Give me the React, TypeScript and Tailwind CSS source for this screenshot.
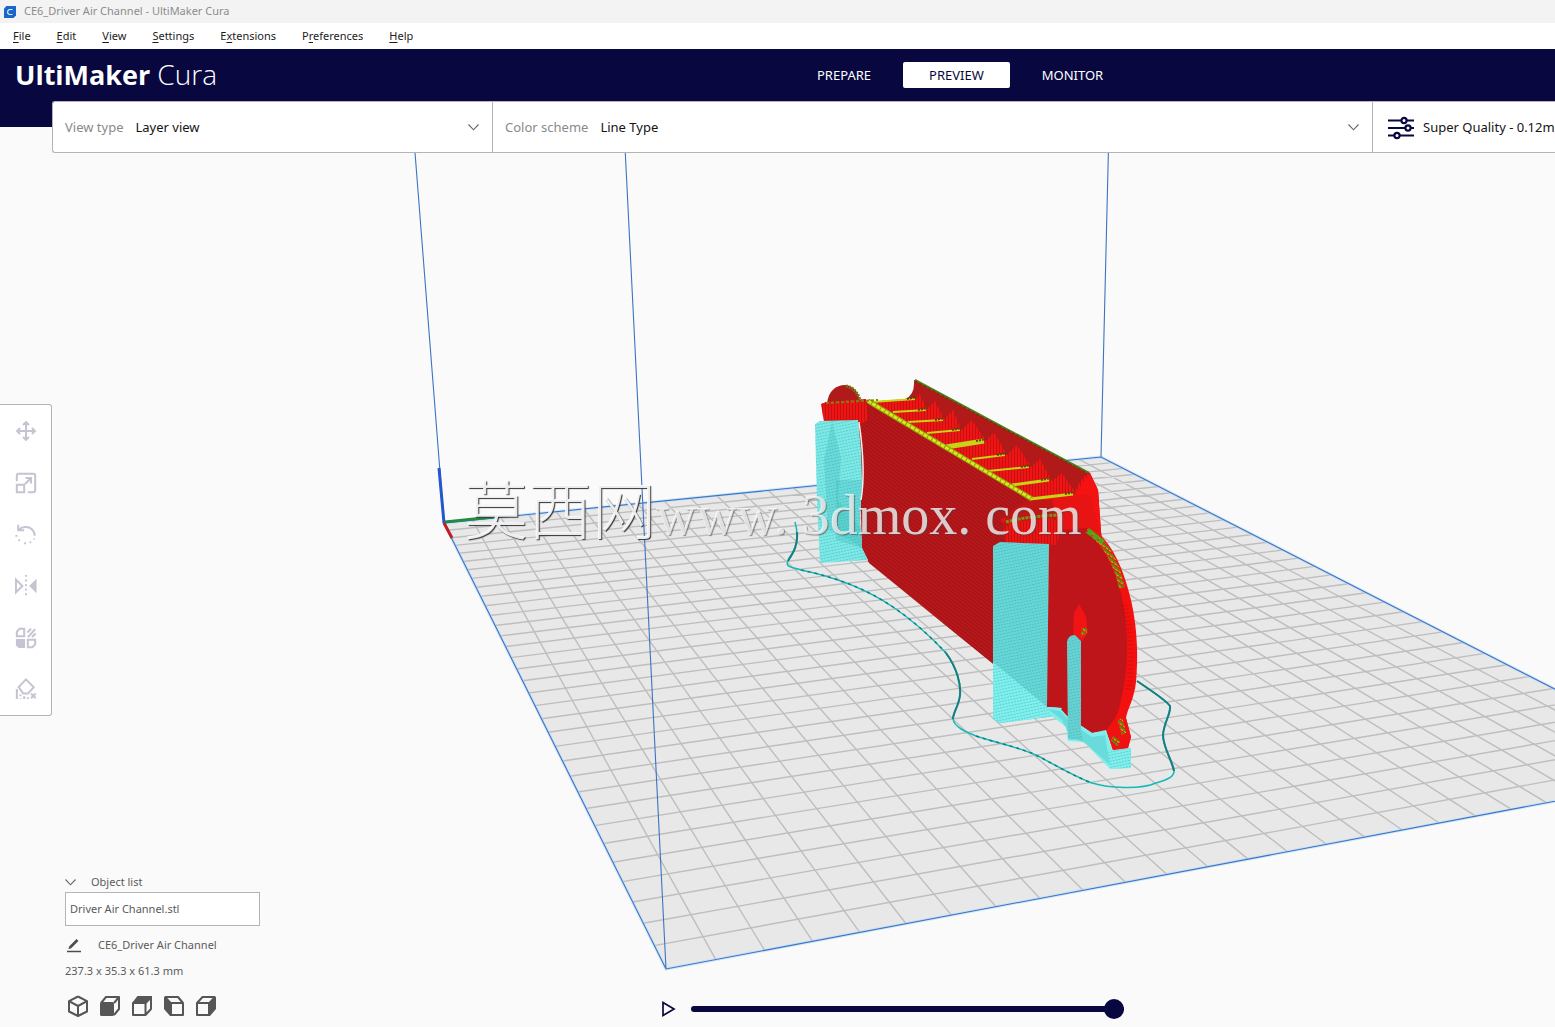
import React from "react";

type Pt = [number, number];

/* ---------- build plate ---------- */

const BACK_LEFT: Pt = [444, 523];
const BACK_RIGHT: Pt = [1101, 457];
const FRONT_RIGHT: Pt = [1715, 771];
const FRONT_LEFT: Pt = [666, 969];
const COLUMNS = 26;
const ROWS = 34;

function makeProjection(a: Pt, b: Pt, c: Pt, d: Pt) {
  const dx1 = b[0] - c[0];
  const dy1 = b[1] - c[1];
  const dx2 = d[0] - c[0];
  const dy2 = d[1] - c[1];
  const sx = a[0] - b[0] + c[0] - d[0];
  const sy = a[1] - b[1] + c[1] - d[1];
  const det = dx1 * dy2 - dx2 * dy1;
  const g = (sx * dy2 - dx2 * sy) / det;
  const h = (dx1 * sy - sx * dy1) / det;
  return (u: number, v: number): Pt => {
    const w = g * u + h * v + 1;
    const x = (b[0] - a[0] + g * b[0]) * u + (d[0] - a[0] + h * d[0]) * v + a[0];
    const y = (b[1] - a[1] + g * b[1]) * u + (d[1] - a[1] + h * d[1]) * v + a[1];
    return [x / w, y / w];
  };
}

const project = makeProjection(BACK_LEFT, BACK_RIGHT, FRONT_RIGHT, FRONT_LEFT);

function gridPath() {
  const parts: string[] = [];
  const line = (p: Pt, q: Pt) =>
    parts.push(`M${p[0].toFixed(1)} ${p[1].toFixed(1)}L${q[0].toFixed(1)} ${q[1].toFixed(1)}`);
  for (let i = 1; i < COLUMNS; i++) line(project(i / COLUMNS, 0), project(i / COLUMNS, 1));
  for (let j = 1; j < ROWS; j++) line(project(0, j / ROWS), project(1, j / ROWS));
  return parts.join("");
}

const RIBS: [number, number, number, number, number][] = [
  [872, 402, 915, 399, 2],
  [893, 412, 926, 410, 2],
  [908, 422, 943, 420, 2],
  [927, 433, 960, 430, 2],
  [946, 447, 984, 441, 5],
  [972, 459, 1005, 455, 2],
  [988, 471, 1029, 467, 2],
  [1012, 485, 1049, 480, 3],
  [1030, 499, 1073, 494, 3],
];

function Scene() {
  return (
    <svg
      className="absolute inset-0 size-full"
      viewBox="0 127 1555 900"
      preserveAspectRatio="xMidYMin slice"
      role="img"
      aria-label="Layer preview of the sliced model on the build plate"
    >
      <defs>
        <pattern id="layers" width="6" height="3" patternUnits="userSpaceOnUse" patternTransform="rotate(38)">
          <rect width="6" height="1" fill="#8a1010" opacity="0.5" />
        </pattern>
        <pattern id="walls" width="3" height="3" patternUnits="userSpaceOnUse">
          <rect width="1" height="3" fill="#a80f0f" opacity="0.6" />
        </pattern>
        <pattern id="support" width="3" height="3" patternUnits="userSpaceOnUse" patternTransform="rotate(-12)">
          <rect width="2" height="1" fill="#2f9fa3" opacity="0.4" />
        </pattern>
        <pattern id="skin" width="4" height="4" patternUnits="userSpaceOnUse" patternTransform="rotate(35)">
          <rect width="4" height="2" fill="#5d8a10" />
          <rect y="2" width="3" height="1" fill="#d8b012" />
        </pattern>
      </defs>

      {/* plate */}
      <path d="M444 523L1101 457L1715 771L666 969Z" fill="#e8e8e8" />
      <path d={gridPath()} stroke="#bebebe" strokeWidth="1.4" fill="none" />
      <path d="M444 523L1101 457L1715 771L666 969Z" fill="none" stroke="#b8d8f8" strokeWidth="3" opacity="0.6" />
      <path
        d="M444 523L1101 457L1715 771L666 969ZM444 523L413 127M1101 457L1109 127M624 127L666 969"
        fill="none"
        stroke="#3a74c4"
        strokeWidth="1.1"
      />
      <path d="M444 523L439 468" stroke="#2258cc" strokeWidth="3" />
      <path d="M445 522L493 517" stroke="#228a44" strokeWidth="3" />
      <path d="M444 523L452 538" stroke="#c01c28" strokeWidth="3" />

      {/* skirt */}
      <path
        d="M795 522C799 536 797 548 789 558C784 568 790 566 801 570C830 576 862 586 893 607C915 622 932 638 946 653C957 668 961 684 960 695C959 706 953 712 953 719C954 727 966 732 976 736C1000 744 1020 747 1040 757C1060 768 1078 778 1092 783C1108 788 1140 790 1156 783C1170 779 1175 776 1174 769C1171 758 1163 747 1163 735C1164 722 1171 714 1170 706C1166 700 1150 690 1137 681"
        fill="none"
        stroke="#16b8b8"
        strokeWidth="1.5"
      />
      <path
        d="M797 532C798 545 794 552 788 561M946 653C957 668 961 684 960 695C959 706 953 712 953 719M1174 771C1171 758 1163 747 1163 735C1164 722 1171 714 1170 706C1166 700 1150 690 1137 681"
        fill="none"
        stroke="#157f80"
        strokeWidth="2"
      />
      <path
        d="M801 570C830 576 862 586 893 607C915 622 932 638 946 653M976 736C1000 744 1020 747 1040 757C1060 768 1078 778 1092 783"
        fill="none"
        stroke="#157f80"
        strokeWidth="1.5"
        strokeDasharray="3 4"
      />

      {/* channel interior and back wall */}
      <path d="M866 402L908 399Q917 392 914 380L1090 473L1098 490L1102 545L1040 545L1030 499Z" fill="#f01414" />
      <path d="M866 402L908 399Q917 392 914 380L1090 473L1098 490L1102 545L1040 545L1030 499Z" fill="url(#walls)" />
      <path d="M1090 473L1098 490L1102 545L1060 545L1034 500L1074 495Z" fill="#f51212" />
      <path
        d="M914 380L1088 473Q1078 482 1075 492L1062 473L1052 481L1040 459L1031 467L1017 445L1007 455L994 432L986 441L972 420L961 430L953 410L944 419L935 401L927 409L919 393L916 398L905 399Q915 395 914 380Z"
        fill="#b21a1a"
      />
      <path d="M915 380L1089 473" stroke="#4d7d18" strokeWidth="2" />
      <path d="M915 381L1089 474" stroke="#7c2412" strokeWidth="1" strokeDasharray="3 2" />

      {/* outer side wall */}
      <path d="M858 404L870 401L1030 499L1058 516L1052 710L1046 707L869 563L862 548Z" fill="#b8171b" />
      <path d="M858 404L870 401L1030 499L1058 516L1052 710L1046 707L869 563L862 548Z" fill="url(#layers)" />
      <path d="M1034 499L1090 494L1100 535L1050 560L1000 520Z" fill="#e81414" />
      <path d="M1006 513L1030 499L1052 500L1058 525L1002 532Z" fill="#c01616" />

      {RIBS.map(([x1, y1, x2, y2, w]) => (
        <g key={x1}>
          <path d={`M${x1} ${y1}L${x2} ${y2}`} stroke="#c6d414" strokeWidth={w} />
          <path d={`M${x2 - 8} ${y2}L${x2 + 2} ${y2 - 2}`} stroke="#5d4412" strokeWidth="2" strokeDasharray="2 1" />
        </g>
      ))}
      <path d="M868 401L1032 499" stroke="#8c9c12" strokeWidth="5" />
      <path d="M868 401L1032 499" stroke="#dfe41c" strokeWidth="3" strokeDasharray="4 1" />

      {/* left clamp */}
      <path d="M827 404C828 391 836 385 845 385C853 386 860 392 860 404Z" fill="#b01a1a" />
      <path d="M846 386C853 387 858 393 860 400" fill="none" stroke="#6c7a14" strokeWidth="3" strokeDasharray="2 1" />
      <path d="M821 404L826 402L866 399L868 420L860 424L824 422Z" fill="#ee1414" />
      <path d="M821 404L826 402L866 399L868 420L860 424L824 422Z" fill="url(#walls)" />
      <path d="M826 403L878 400" stroke="#7c8214" strokeWidth="2" strokeDasharray="3 2" />

      {/* left support */}
      <path d="M815 424L820 421L858 420L861 450L862 482L860 520L862 548L868 560L820 563L817 500Z" fill="#7ce9e7" />
      <path d="M832 421L841 458L838 500L862 530L862 548L850 540L828 530L824 460Z" fill="#3fb9bb" opacity="0.3" />
      <path d="M836 480L862 480L860 520L862 548L836 540Z" fill="#3fb9bb" opacity="0.3" />
      <path d="M815 424L820 421L858 420L861 450L862 482L860 520L862 548L868 560L820 563L817 500Z" fill="url(#support)" />
      <path d="M859 422Q866 470 861 500" fill="none" stroke="#f2f2f2" strokeWidth="1.5" />

      {/* front flange */}
      <path
        d="M1048 545L1060 530L1088 528C1106 540 1118 562 1126 592C1131 620 1136 650 1131 690C1128 705 1120 716 1116 730L1092 733L1068 717L1058 709L1047 707Z"
        fill="#bd1519"
      />
      <path
        d="M1086 529L1096 531C1113 545 1124 570 1131 600C1138 630 1138 660 1136 682C1134 700 1127 710 1126 718L1131 737L1128 748L1113 750L1106 731C1112 722 1118 716 1120 704C1127 680 1128 650 1126 625C1123 590 1113 556 1086 529Z"
        fill="#f51010"
      />
      <path
        d="M1124 605C1131 630 1133 665 1128 690"
        fill="none"
        stroke="#b01010"
        strokeWidth="6"
        strokeDasharray="1 3"
        opacity="0.5"
      />
      <path d="M1087 530C1106 542 1117 565 1122 588" fill="none" stroke="url(#skin)" strokeWidth="6" />
      <path d="M1088 531L1104 543" stroke="#55a01c" strokeWidth="5" strokeDasharray="5 2" />
      <path d="M1003 532L1010 522L1052 518L1062 526L1056 545L1006 544Z" fill="#ee1414" />
      <path d="M1003 532L1010 522L1052 518L1062 526L1056 545L1006 544Z" fill="url(#walls)" />
      <path d="M1006 522Q1028 516 1060 515" fill="none" stroke="#7c9416" strokeWidth="3" strokeDasharray="3 1" />
      <path d="M1079 604L1086 616L1088 633L1082 641L1073 634L1074 613Z" fill="#f01414" />
      <path d="M1082 628L1087 628L1087 633L1081 637Z" fill="url(#skin)" />

      {/* right supports */}
      <path d="M993 546L1000 542L1049 544L1047 707L1062 708L1056 716L1000 723L993 719Z" fill="#66d6d6" />
      <path d="M993 662L1047 707L1062 708L1056 716L1000 723L993 719Z" fill="#80f0ee" />
      <path d="M993 546L1000 542L1049 544L1047 707L1062 708L1056 716L1000 723L993 719Z" fill="url(#support)" />
      <path d="M1047 707L1060 708L1068 717L1092 733L1106 730L1112 750L1131 748L1131 768L1110 769L1084 742L1068 741L1066 727L1052 716Z" fill="#80eeec" />
      <path d="M1048 709L1060 711L1070 722L1092 737L1105 735L1110 765L1086 744L1070 736L1062 720Z" fill="#40b8ba" opacity="0.35" />
      <path d="M1067 642Q1068 635 1075 635L1081 641L1081 730L1083 740L1068 739Z" fill="#68d2d2" />
      <path d="M1067 642Q1068 635 1075 635L1081 641L1081 730L1083 740L1068 739Z" fill="url(#support)" />
      <path d="M1108 750L1131 748L1131 768L1110 769Z" fill="url(#support)" />
      <path d="M1107 731L1126 718L1131 737L1128 748L1113 750Z" fill="#f01212" />
      <path d="M1120 719L1124 734M1112 738L1119 744" stroke="url(#skin)" strokeWidth="5" />
    </svg>
  );
}

/* ---------- icons ---------- */

function Chevron({ className = "" }: { className?: string }) {
  return (
    <svg className={className} width="11" height="7" viewBox="0 0 11 7" fill="none" stroke="#666666" strokeWidth="1.1" aria-hidden="true">
      <path d="M0.500 0.500L5.500 5.800L10.500 0.500" />
    </svg>
  );
}

function CuraMark() {
  return (
    <svg width="12" height="12" viewBox="0 0 12 12" aria-hidden="true">
      <path d="M2.500 0H12V9.500L9.500 12H0V2.500Z" fill="#1b67c9" />
      <path d="M8.500 3.500H5.200L3.700 5V7.200L5.200 8.500H8.500" fill="none" stroke="#d8ecff" strokeWidth="1.2" />
    </svg>
  );
}

const TOOLS: { label: string; art: React.ReactNode }[] = [
  {
    label: "Move",
    art: (
      <path d="M12 2.500V21.500M2.500 12H21.500M8.800 5.500L12 2.300L15.200 5.500M8.800 18.500L12 21.700L15.200 18.500M5.500 8.800L2.300 12L5.500 15.200M18.500 8.800L21.700 12L18.500 15.200" />
    ),
  },
  {
    label: "Scale",
    art: <path d="M2 10V4Q2 2 4 2H20Q22 2 22 4V20Q22 22 20 22H14M2 14H10V22H2ZM11 13L17.500 6.500M11.500 6.500H17.500V12.500" />,
  },
  {
    label: "Rotate",
    art: (
      <>
        <path d="M4 7C9 3 16 3.500 19.500 8Q21.500 10.500 21.500 14M3.500 2V8H10" />
        <path d="M1.500 13V15M4 18L5 19.500M10 22.200H12M16 21.500L17.500 20.600M20.500 18L21 17" />
      </>
    ),
  },
  {
    label: "Mirror",
    art: (
      <>
        <path d="M1 5V19L8 12Z" />
        <path d="M23.500 4V20L15.500 12Z" fill="currentColor" stroke="none" />
        <path d="M12 0V2M12 5V7M12 10V12M12 15V17M12 20V22" />
      </>
    ),
  },
  {
    label: "Per model settings",
    art: (
      <>
        <path d="M5 2H10V10H2V5ZM14 14H22V19L19 22H14Z" />
        <path d="M1 13H11V23H4L1 20Z" fill="currentColor" stroke="none" />
        <path d="M13.500 6L17.500 2M14 11L22 2.500M18.500 11L22.500 7" />
      </>
    ),
  },
  {
    label: "Support blocker",
    art: (
      <>
        <path d="M12 1.500L20.500 10L14 17H9L4 10Z" />
        <path d="M2 12V23M6 18V20M6 22V23M10 20V23M14 21V23M17.500 17L22.500 22M22.500 17L17.500 22" />
      </>
    ),
  },
];

const VIEWS: { label: string; art: React.ReactNode }[] = [
  {
    label: "3D view",
    art: <path d="M11 1.500L20 6.200V16.500L11 21L2 16.500V6.200L11 1.500M2 6.200L11 11L20 6.200M11 11V21" />,
  },
  {
    label: "Front view",
    art: (
      <>
        <path d="M2 8L7 2H20V14L15 20M15 8L20 2" />
        <rect x="1" y="7" width="14" height="14" rx="1.500" fill="currentColor" stroke="none" />
      </>
    ),
  },
  {
    label: "Top view",
    art: (
      <>
        <path d="M2 8H14.500V20H2ZM14.500 20L20 14V2" />
        <path d="M1 8L6.500 1H21V3L15 9H1Z" fill="currentColor" stroke="none" />
      </>
    ),
  },
  {
    label: "Left side view",
    art: (
      <>
        <path d="M8 8H20V20H8ZM2 2H15L20 8" />
        <path d="M1 2L2.500 1L9 8V21H7L1 14Z" fill="currentColor" stroke="none" />
      </>
    ),
  },
  {
    label: "Right side view",
    art: (
      <>
        <path d="M2 8H14V20H2ZM2 8L7.500 2H20" />
        <path d="M21 2L19.500 1L13 8V21H15L21 14Z" fill="currentColor" stroke="none" />
      </>
    ),
  },
];

/* ---------- chrome ---------- */

const MENUS: [string, string, string][] = [
  ["", "F", "ile"],
  ["", "E", "dit"],
  ["", "V", "iew"],
  ["", "S", "ettings"],
  ["E", "x", "tensions"],
  ["P", "r", "eferences"],
  ["", "H", "elp"],
];

function TitleBar() {
  return (
    <div className="flex h-[23px] items-center gap-2 bg-[#f3f3f3] pl-1 text-[11px] text-[#8c8c8c]">
      <CuraMark />
      <span>CE6_Driver Air Channel - UltiMaker Cura</span>
    </div>
  );
}

function MenuBar() {
  return (
    <nav className="flex h-[26px] items-center gap-[26px] bg-white pl-[13px] text-[11px] text-[#1c1c1c]">
      {MENUS.map(([pre, key, post]) => (
        <button key={pre + key + post} type="button">
          {pre}
          <span className="underline underline-offset-2">{key}</span>
          {post}
        </button>
      ))}
    </nav>
  );
}

function Header() {
  const tab = "h-[26px] rounded-[2px] px-[26px] pt-px text-[13px]";
  return (
    <header className="flex h-[78px] items-start bg-[#08073f] text-white">
      <h1 className="w-[791px] flex-none pl-[15px] pt-[7px] font-['Open_Sans',sans-serif] text-[27px] leading-9 whitespace-nowrap">
        <span className="font-bold">UltiMaker</span> <span className="text-[28px] font-light">Cura</span>
      </h1>
      <nav className="flex gap-[6px] pt-[13px]">
        <button type="button" className={tab}>PREPARE</button>
        <button type="button" aria-current="page" className={`${tab} bg-white text-[#08073f]`}>PREVIEW</button>
        <button type="button" className={tab}>MONITOR</button>
      </nav>
    </header>
  );
}

function Picker({ id, label, value }: { id: string; label: string; value: string }) {
  return (
    <div className="relative flex min-w-0 items-center gap-3 border-r border-[#b4b4b4] px-3 pt-px">
      <label htmlFor={id} className="flex-none text-[#8a8a8a]">{label}</label>
      <select id={id} defaultValue={value} className="min-w-0 flex-1 appearance-none bg-transparent text-[#141414]">
        <option>{value}</option>
      </select>
      <Chevron className="pointer-events-none absolute right-[13px]" />
    </div>
  );
}

function StageBar() {
  return (
    <div className="relative -mt-[26px] ml-[52px] grid h-[52px] grid-cols-[440px_minmax(0,880px)_minmax(0,1fr)] overflow-hidden rounded-l-[3px] border-y border-l border-[#b4b4b4] bg-white text-[13px]">
      <Picker id="view-type" label="View type" value="Layer view" />
      <Picker id="color-scheme" label="Color scheme" value="Line Type" />
      <button type="button" className="flex min-w-0 items-center gap-2 overflow-hidden pt-px pl-[14px] whitespace-nowrap text-[#141414]">
        <svg className="flex-none" width="28" height="24" viewBox="0 0 28 24" fill="none" stroke="#08073f" strokeWidth="2.2" aria-hidden="true">
          <path d="M1 4.500H14M20 4.500H27M1 12H18M24 12H27M1 19.500H7M13 19.500H27" />
          <circle cx="17" cy="4.500" r="2.600" />
          <circle cx="21" cy="12" r="2.600" />
          <circle cx="10" cy="19.500" r="2.600" />
        </svg>
        <span>Super Quality - 0.12mm</span>
      </button>
    </div>
  );
}

function ToolPanel() {
  return (
    <aside className="relative mt-[251px] flex h-[312px] w-[52px] flex-col rounded-r-[3px] border-y border-r border-[#b4b4b4] bg-white">
      {TOOLS.map((tool) => (
        <button
          key={tool.label}
          type="button"
          aria-label={tool.label}
          className="flex flex-1 items-center justify-center text-[#c4c4d2]"
        >
          <svg width="22" height="22" viewBox="0 0 24 24" fill="none" stroke="currentColor" strokeWidth="2.2">
            {tool.art}
          </svg>
        </button>
      ))}
    </aside>
  );
}

function ObjectPanel() {
  return (
    <section className="w-[195px] pb-[2px] text-[11px] text-[#5a5a5a]">
      <button type="button" className="flex h-5 items-center gap-[15px]">
        <Chevron />
        Object list
      </button>
      <button type="button" className="flex h-[34px] w-full items-center border border-[#b4b4b4] bg-white pl-1">
        Driver Air Channel.stl
      </button>
      <div className="mt-[9px] flex h-5 items-center gap-4">
        <button type="button" aria-label="Rename project">
          <svg width="17" height="16" viewBox="0 0 17 16" fill="none" stroke="#4c4c4c" aria-hidden="true">
            <path d="M5 10.500L12.500 3" strokeWidth="2.600" />
            <path d="M2 14.500H16" strokeWidth="1.500" />
            <path d="M3.500 12L4 9.500L6 11.500Z" fill="#4c4c4c" stroke="none" />
          </svg>
        </button>
        <span>CE6_Driver Air Channel</span>
      </div>
      <p className="mt-[6px] h-5 leading-5">237.3 x 35.3 x 61.3 mm</p>
      <div className="mt-[14px] flex gap-[10px] pl-[2px]">
        {VIEWS.map((view) => (
          <button key={view.label} type="button" aria-label={view.label} className="text-[#565656]">
            <svg width="22" height="22" viewBox="0 0 22 22" fill="none" stroke="currentColor" strokeWidth="2" strokeLinejoin="round">
              {view.art}
            </svg>
          </button>
        ))}
      </div>
    </section>
  );
}

function SimulationBar() {
  return (
    <div className="ml-[400px] flex h-5 items-center gap-[14px]">
      <button type="button" aria-label="Play simulation">
        <svg width="17" height="16" viewBox="0 0 17 16" fill="none" stroke="#08073f" strokeWidth="1.700" aria-hidden="true">
          <path d="M3 1.500V14.500L14 8Z" />
        </svg>
      </button>
      <input
        type="range"
        aria-label="Simulation progress"
        defaultValue={100}
        className="h-5 w-[433px] appearance-none bg-transparent [&::-webkit-slider-runnable-track]:h-[6px] [&::-webkit-slider-runnable-track]:rounded-full [&::-webkit-slider-runnable-track]:bg-[#08073f] [&::-webkit-slider-thumb]:-mt-[7px] [&::-webkit-slider-thumb]:size-5 [&::-webkit-slider-thumb]:appearance-none [&::-webkit-slider-thumb]:rounded-full [&::-webkit-slider-thumb]:bg-[#08073f]"
      />
    </div>
  );
}

export default function App() {
  return (
    <div className="flex min-h-screen flex-col overflow-hidden bg-[#fafafa] font-['Noto_Sans',sans-serif]">
      <TitleBar />
      <MenuBar />
      <Header />
      <main className="relative flex flex-1 flex-col">
        <Scene />
        <StageBar />
        <ToolPanel />
        <p className="pointer-events-none absolute top-[331px] left-[464px] font-['Liberation_Serif','Noto_Sans_CJK_SC',serif] text-[56px] leading-[96px] whitespace-nowrap text-white/75 [text-shadow:1px_1px_1px_#44444499]">
          <span className="font-['Noto_Sans_CJK_SC',sans-serif] text-[64px] font-light text-white/90 [text-shadow:1px_1px_1px_#333333]">莫西网</span>www. 3dmox. com
        </p>
        <footer className="relative mt-auto flex items-end pb-2 pl-[65px]">
          <ObjectPanel />
          <SimulationBar />
        </footer>
      </main>
    </div>
  );
}
